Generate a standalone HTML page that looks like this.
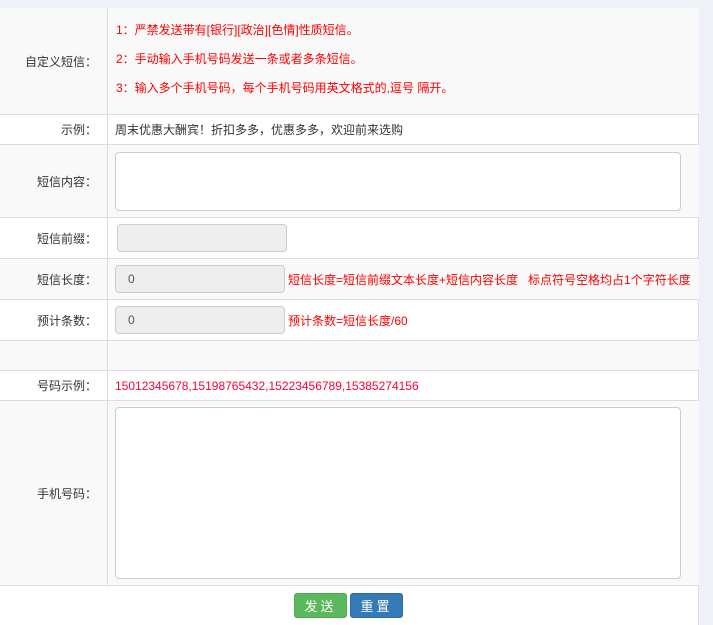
<!DOCTYPE html>
<html><head><meta charset="utf-8"><style>
*{box-sizing:border-box;margin:0;padding:0}
body{width:713px;height:625px;overflow:hidden;background:#eef1f5;font:12px "Liberation Sans","Noto Sans CJK SC",sans-serif;color:#333;position:relative}
.wrap{position:absolute;left:0;top:8px;width:699px;height:617px;background:#fff;border-right:1px solid #ddd}
.row{position:absolute;left:0;width:699px;border-bottom:1px solid #ddd}
.g{background:#f9f9f9}
.lab{position:absolute;left:0;top:0;width:108px;height:100%;border-right:1px solid #ddd;text-align:right;padding-right:10px;display:flex;align-items:center;justify-content:flex-end}
.val{position:absolute;left:115px;top:0;height:100%;display:flex;align-items:center;white-space:nowrap}
.red{color:#f00}
.inp{position:absolute;background:#eee;border:1px solid #ccc;border-radius:4px;padding-left:12px;display:flex;align-items:center;color:#555}
.ta{position:absolute;background:#fff;border:1px solid #ccc;border-radius:4px}
.btn{position:absolute;top:593px;height:25px;width:53px;border-radius:3px;color:#fff;text-align:center;line-height:25px;font-size:13px;letter-spacing:3px}
</style></head><body>
<div class="wrap"></div>
<div class="row g" style="top:8px;height:107px"><div class="lab">自定义短信：</div>
<div class="red" style="position:absolute;left:116px;top:8px;line-height:29px">1：严禁发送带有[银行][政治][色情]性质短信。<br>2：手动输入手机号码发送一条或者多条短信。<br>3：输入多个手机号码，每个手机号码用英文格式的,逗号 隔开。</div></div>
<div class="row" style="top:115px;height:30px"><div class="lab">示例：</div><div class="val">周末优惠大酬宾！折扣多多，优惠多多，欢迎前来选购</div></div>
<div class="row g" style="top:145px;height:73px"><div class="lab">短信内容：</div></div>
<div class="ta" style="left:115px;top:152px;width:566px;height:59px"></div>
<div class="row" style="top:218px;height:41px"><div class="lab">短信前缀：</div></div>
<div class="inp" style="left:117px;top:224px;width:170px;height:28px"></div>
<div class="row g" style="top:259px;height:41px"><div class="lab">短信长度：</div><div class="val red" style="left:288px">短信长度=短信前缀文本长度+短信内容长度&nbsp;&nbsp;&nbsp;标点符号空格均占1个字符长度</div></div>
<div class="inp" style="left:115px;top:265px;width:170px;height:28px">0</div>
<div class="row" style="top:300px;height:41px"><div class="lab">预计条数：</div><div class="val red" style="left:288px">预计条数=短信长度/60</div></div>
<div class="inp" style="left:115px;top:306px;width:170px;height:28px">0</div>
<div class="row g" style="top:341px;height:30px"><div class="lab"></div></div>
<div class="row" style="top:371px;height:30px"><div class="lab">号码示例：</div><div class="val" style="color:#f03">15012345678,15198765432,15223456789,15385274156</div></div>
<div class="row g" style="top:401px;height:185px"><div class="lab">手机号码：</div></div>
<div class="ta" style="left:115px;top:407px;width:566px;height:172px"></div>
<div class="btn" style="left:294px;background:#5cb85c;border:1px solid #4cae4c">发送</div>
<div class="btn" style="left:350px;background:#337ab7;border:1px solid #2e6da4">重置</div>
</body></html>
